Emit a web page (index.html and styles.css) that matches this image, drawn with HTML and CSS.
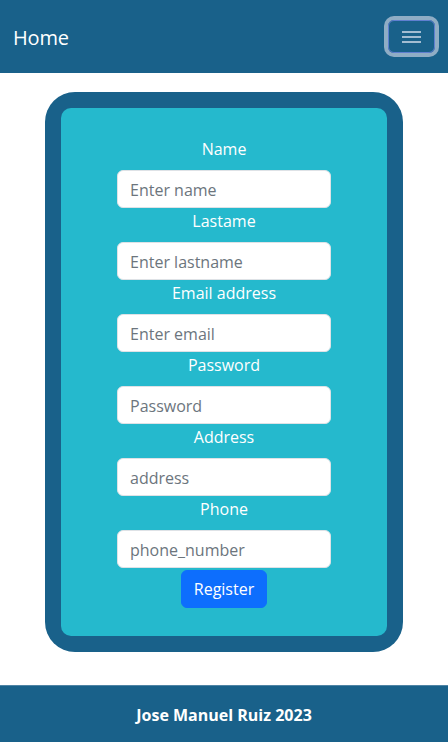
FILE: index.html
```html
<!DOCTYPE html>
<html lang="en">
<head>
<meta charset="utf-8">
<title>Home</title>
<link rel="stylesheet" href="styles.css">
</head>
<body>
<header class="navbar">
  <span class="brand">Home</span>
  <button class="toggler" type="button" aria-label="Toggle navigation">
    <span class="bar"></span><span class="bar"></span><span class="bar"></span>
  </button>
</header>
<main class="main">
  <div class="card">
    <form class="form">
      <div class="field">
        <label class="label" for="name">Name</label>
        <input class="input" id="name" type="text" placeholder="Enter name">
      </div>
      <div class="field">
        <label class="label" for="lastname">Lastame</label>
        <input class="input" id="lastname" type="text" placeholder="Enter lastname">
      </div>
      <div class="field">
        <label class="label" for="email">Email address</label>
        <input class="input" id="email" type="email" placeholder="Enter email">
      </div>
      <div class="field">
        <label class="label" for="password">Password</label>
        <input class="input" id="password" type="password" placeholder="Password">
      </div>
      <div class="field">
        <label class="label" for="address">Address</label>
        <input class="input" id="address" type="text" placeholder="address">
      </div>
      <div class="field">
        <label class="label" for="phone">Phone</label>
        <input class="input" id="phone" type="text" placeholder="phone_number">
      </div>
      <button class="submit" type="button">Register</button>
    </form>
  </div>
</main>
<footer class="footer">Jose Manuel Ruiz 2023</footer>
</body>
</html>
```
FILE: styles.css
```css
* { box-sizing: border-box; }
html, body { margin: 0; padding: 0; }
body {
  font-family: "Open Sans", "Noto Sans", sans-serif;
  font-size: 16px;
  color: #212529;
  background: #fff;
  min-height: 100vh;
  display: flex;
  flex-direction: column;
}
.navbar {
  height: 73px;
  background: #19618a;
  display: flex;
  align-items: center;
  justify-content: space-between;
  padding: 0 13px;
}
.brand {
  color: #fff;
  font-size: 20px;
  line-height: 1;
  margin-top: 2px;
  letter-spacing: -0.2px;
}
.toggler {
  width: 47px;
  height: 33px;
  border: 1px solid #5f7fd0;
  border-radius: 6px;
  background: transparent;
  box-shadow: 0 0 0 4px #8fadc5;
  display: flex;
  flex-direction: column;
  align-items: center;
  justify-content: center;
  gap: 3px;
  padding: 0;
}
.bar {
  display: block;
  width: 19px;
  height: 2px;
  background: #a3bdd2;
}
.main {
  flex: 1;
  padding: 19px 45px 0;
}
.card {
  background: #19618a;
  border-radius: 30px;
  padding: 16px;
}
.form {
  background: #25b9cd;
  border-radius: 10px;
  padding: 28px 0 28px;
  display: flex;
  flex-direction: column;
  align-items: center;
}
.field {
  display: flex;
  flex-direction: column;
  align-items: center;
}
.label {
  color: #fff;
  font-size: 16px;
  line-height: 26px;
  margin-bottom: 8px;
}
.input {
  width: 214px;
  height: 38px;
  padding: 7px 12px 5px;
  font: inherit;
  font-size: 16px;
  border: 1px solid #dee2e6;
  border-radius: 6px;
  background: #fff;
  color: #212529;
}
.input::placeholder { color: #6c757d; }
.submit {
  margin-top: 2px;
  height: 38px;
  padding: 0 12px;
  font: inherit;
  font-size: 16px;
  color: #fff;
  background: #0d6efd;
  border: 1px solid #0d6efd;
  border-radius: 6px;
}
.footer {
  height: 57px;
  background: #19618a;
  border-top: 1px solid #4f84a5;
  color: #fff;
  font-weight: 700;
  font-size: 16px;
  display: flex;
  align-items: center;
  justify-content: center;
  padding-top: 2px;
}
```
